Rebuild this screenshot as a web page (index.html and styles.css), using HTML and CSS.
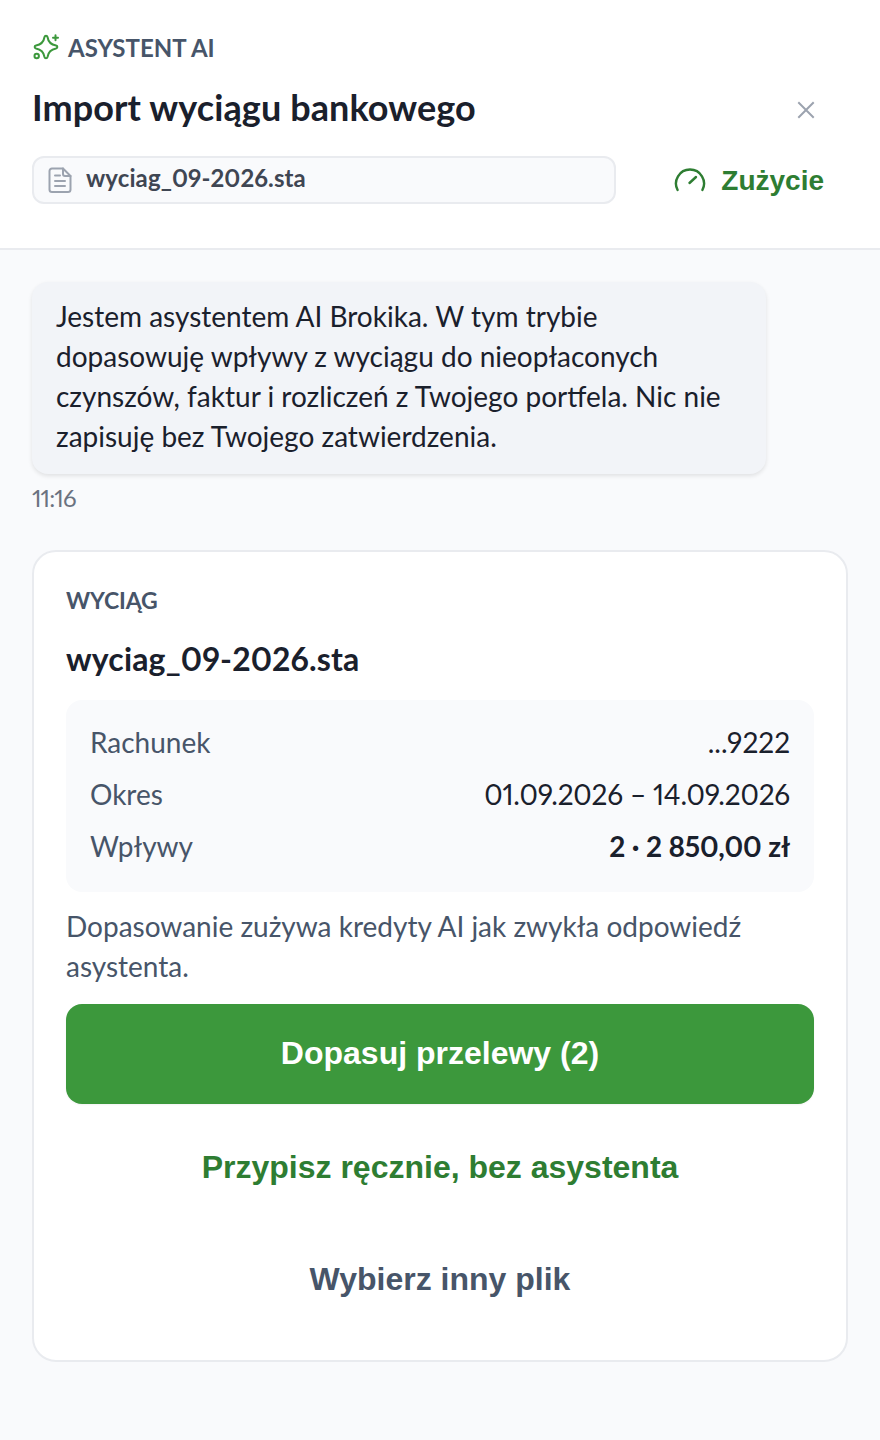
FILE: index.html
```html
<!DOCTYPE html>
<html lang="pl">
<head>
<meta charset="utf-8">
<title>Import wyciągu bankowego</title>
<link rel="stylesheet" href="styles.css">
</head>
<body>
<div class="screen">
  <header class="header">
    <div class="eyebrow">
      <svg class="spark" width="28" height="28" viewBox="0 0 28 28" fill="none" stroke="#3c983c" stroke-width="2" stroke-linecap="round" stroke-linejoin="round"><path d="M15.500 4C16.200 8.500 19 11.600 24 12.500C25.800 12.900 25.800 15.100 24 15.500C19 16.400 16.200 19.500 15.500 24C15.100 25.800 12.900 25.800 12.500 24C11.800 19.500 9 16.400 4 15.500C2.200 15.100 2.200 12.900 4 12.500C9 11.600 11.800 8.500 12.500 4C12.900 2.200 15.100 2.200 15.500 4Z"/><path d="M23.500 2.200v5M21 4.700h5"/><circle cx="4.700" cy="23" r="2.200"/></svg>
      <span class="eyebrow-text">ASYSTENT AI</span>
    </div>
    <div class="title-row">
      <h1 class="title">Import wyciągu bankowego</h1>
      <svg class="close" width="18" height="18" viewBox="0 0 18 18" fill="none" stroke="#9ca3af" stroke-width="2" stroke-linecap="square"><path d="M2 2l14 14M16 2L2 16"/></svg>
    </div>
    <div class="file-row">
      <div class="file-pill">
        <svg width="24" height="26" viewBox="0 0 24 26" fill="none" stroke="#9ca3af" stroke-width="2" stroke-linejoin="round" stroke-linecap="round"><path d="M4 1.500H15L22.500 9V22.500A2.500 2.500 0 0 1 20 25H4A2.500 2.500 0 0 1 1.500 22.500V4A2.500 2.500 0 0 1 4 1.500Z"/><path d="M15 1.500V7A2 2 0 0 0 17 9H22.500M7 8.500H12M7 14H17M7 19H17"/></svg>
        <span class="file-name">wyciag_09-2026.sta</span>
      </div>
      <div class="usage">
        <svg width="32" height="32" viewBox="0 0 32 32" fill="none" stroke="#2e7d32" stroke-width="2.400" stroke-linecap="round"><path d="M3.600 26A14 14 0 1 1 28.400 26"/><path d="M15.500 19L22 13"/></svg>
        <span class="usage-text">Zużycie</span>
      </div>
    </div>
  </header>
  <main class="content">
    <div class="bubble">Jestem asystentem AI Brokika. W tym trybie dopasowuję wpływy z wyciągu do nieopłaconych czynszów, faktur i rozliczeń z Twojego portfela. Nic nie zapisuję bez Twojego zatwierdzenia.</div>
    <div class="time">11:16</div>
    <section class="card">
      <div class="card-label">WYCIĄG</div>
      <div class="card-title">wyciag_09-2026.sta</div>
      <div class="facts">
        <div class="fact"><span class="fact-key">Rachunek</span><span class="fact-value">...9222</span></div>
        <div class="fact"><span class="fact-key">Okres</span><span class="fact-value dates">01.09.2026 – 14.09.2026</span></div>
        <div class="fact"><span class="fact-key">Wpływy</span><span class="fact-value strong">2 · 2 850,00 zł</span></div>
      </div>
      <p class="note">Dopasowanie zużywa kredyty AI jak zwykła odpowiedź asystenta.</p>
      <div class="btn btn-primary">Dopasuj przelewy (2)</div>
      <div class="btn btn-green">Przypisz ręcznie, bez asystenta</div>
      <div class="btn btn-gray">Wybierz inny plik</div>
    </section>
  </main>
</div>
</body>
</html>
```
FILE: styles.css
```css
* { box-sizing: border-box; }
html, body { margin: 0; padding: 0; }
body { font-family: "Lato", "Liberation Sans", sans-serif; font-variant-numeric: proportional-nums; background: #f9fafc; color: #1a202c; }
.screen { width: 880px; height: 1440px; display: flex; flex-direction: column; overflow: hidden; }
.header { height: 250px; background: #fff; border-bottom: 2px solid #e9ebef; padding: 33px 32px 0; }
.eyebrow { display: flex; align-items: center; gap: 8px; height: 28px; }
.spark { flex: none; }
.eyebrow-text { font-size: 24px; font-weight: 700; color: #475569; }
.title-row { display: flex; align-items: center; justify-content: space-between; margin-top: 22px; height: 48px; padding-right: 33px; }
.title { margin: 0; font-size: 36px; font-weight: 700; letter-spacing: .1px; color: #1a202c; }
.close { flex: none; margin-top: 6px; }
.file-row { display: flex; align-items: center; justify-content: space-between; margin-top: 25px; }
.file-pill { width: 584px; height: 48px; background: #f9fafc; border: 2px solid #e9ebef; border-radius: 12px; display: flex; align-items: center; gap: 14px; padding-left: 14px; }
.file-name { margin-bottom: 5px; font-size: 24px; font-weight: 700; letter-spacing: .1px; color: #3f4653; }
.usage { display: flex; align-items: center; gap: 15px; padding-right: 24px; }
.usage-text { margin-top: 2px; font-family: "Liberation Sans", sans-serif; font-size: 28px; font-weight: 700; color: #2e7d32; }
.content { flex: 1; padding: 32px 32px 0; }
.bubble { width: 734px; height: 192px; padding: 14px 24px; background: #f2f4f8; border-radius: 16px; box-shadow: 0 2px 4px rgba(0,0,0,.1); font-size: 28px; line-height: 40px; color: #1a202c; }
.time { margin-top: 10px; font-size: 24px; letter-spacing: -.9px; line-height: 28px; color: #6b7280; }
.card { margin-top: 38px; height: 812px; background: #fff; border: 2px solid #e9ebef; border-radius: 24px; padding: 32px; }
.card-label { font-size: 23px; font-weight: 700; letter-spacing: -.1px; line-height: 32px; color: #475569; }
.card-title { margin-top: 23px; font-size: 32px; font-weight: 700; letter-spacing: .15px; line-height: 40px; color: #1a202c; }
.facts { margin-top: 21px; height: 192px; background: #f9fafc; border-radius: 16px; padding: 22px 24px 0; display: flex; flex-direction: column; gap: 12px; }
.fact { display: flex; justify-content: space-between; font-size: 28px; line-height: 40px; }
.fact-key { color: #475569; }
.fact-value { color: #1a202c; }
.dates { letter-spacing: -.18px; }
.strong { font-weight: 700; letter-spacing: -.15px; }
.note { margin: 14px 0 0; font-size: 28px; line-height: 40px; color: #475569; }
.btn { display: flex; align-items: center; justify-content: center; height: 100px; font-family: "Liberation Sans", sans-serif; font-size: 32px; font-weight: 700; }
.btn-primary { margin-top: 18px; padding-bottom: 2px; background: #3c983c; color: #fff; border-radius: 16px; box-shadow: 0 1px 2px rgba(0,0,0,.05); }
.btn-green { margin-top: 13px; color: #2e7d32; }
.btn-gray { margin-top: 12px; color: #475569; }
```
